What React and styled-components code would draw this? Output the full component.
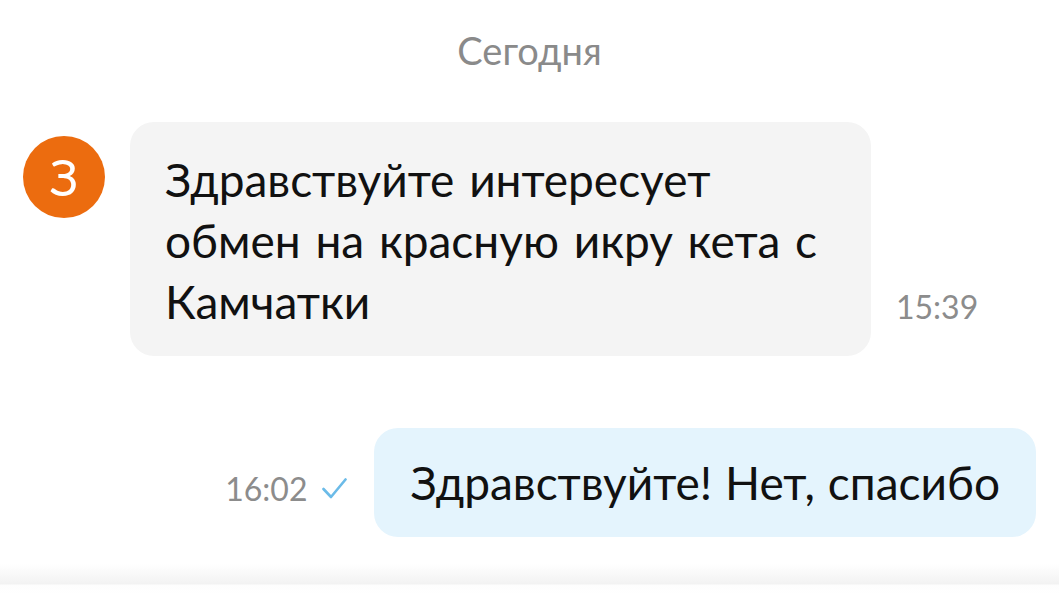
import React from "react";
import styled, { createGlobalStyle } from "styled-components";

const Global = createGlobalStyle`
  html, body { margin: 0; padding: 0; background: #fff; }
  body { font-family: Lato, "Open Sans", sans-serif; }
`;

const Page = styled.div`
  width: 1059px;
  height: 600px;
  display: flex;
  flex-direction: column;
  overflow: hidden;
  background: #fff;
`;

const Feed = styled.div`
  flex: 1;
  display: flex;
  flex-direction: column;
  padding: 28px 23px 0 23px;
`;

const DateLabel = styled.div`
  text-align: center;
  font-size: 38px;
  line-height: 44px;
  color: #8a8a8a;
  margin-bottom: 50px;
`;

const Row = styled.div`
  display: flex;
  align-items: ${(p) => (p.$out ? "center" : "flex-start")};
  justify-content: ${(p) => (p.$out ? "flex-end" : "flex-start")};
  gap: ${(p) => (p.$out ? "27px" : "25px")};
  margin-bottom: ${(p) => p.$mb || "0px"};
`;

const Avatar = styled.div`
  width: 82px;
  height: 82px;
  border-radius: 50%;
  background: #ec6c0f;
  color: #fff;
  font-size: 50px;
  line-height: 1;
  display: flex;
  align-items: center;
  justify-content: center;
  margin-top: 14px;
  flex-shrink: 0;
`;

const Bubble = styled.div`
  background: ${(p) => (p.$out ? "#e4f4fd" : "#f4f4f4")};
  border-radius: 24px;
  padding: ${(p) => (p.$out ? "24px 36px 24px 36px" : "27px 36px 24px 35px")};
  width: ${(p) => p.$w || "auto"};
  box-sizing: border-box;
  font-size: 46px;
  line-height: 61px;
  word-spacing: ${(p) => (p.$out ? "1px" : "3px")};
  color: #111;
`;

const Time = styled.div`
  font-size: 32px;
  line-height: 38px;
  color: #8c8c8c;
  display: flex;
  align-items: center;
  gap: 15px;
  align-self: ${(p) => (p.$end ? "flex-end" : "center")};
  margin-bottom: ${(p) => (p.$end ? "30px" : "0")};
  padding-top: ${(p) => (p.$end ? "0" : "12px")};
`;

const Footer = styled.div`
  height: 36px;
  flex-shrink: 0;
  background: linear-gradient(#fff 0px, #f2f2f2 20px, #fdfdfd 21px, #fff 30px);
`;

const Check = () => (
  <svg width="25" height="21" viewBox="0 0 25 21" fill="none">
    <path d="M1.5 11 L9 19 L23.5 1.5" stroke="#6bbbe8" strokeWidth="2.6" strokeLinecap="round" strokeLinejoin="round" />
  </svg>
);

export default function App() {
  return (
    <Page>
      <Global />
      <Feed>
        <DateLabel>Сегодня</DateLabel>
        <Row $mb="72px">
          <Avatar>З</Avatar>
          <Bubble $w="741px">
            Здравствуйте интересует обмен на красную икру кета с Камчатки
          </Bubble>
          <Time $end>15:39</Time>
        </Row>
        <Row $out>
          <Time>
            16:02 <Check />
          </Time>
          <Bubble $out>Здравствуйте! Нет, спасибо</Bubble>
        </Row>
      </Feed>
      <Footer />
    </Page>
  );
}
